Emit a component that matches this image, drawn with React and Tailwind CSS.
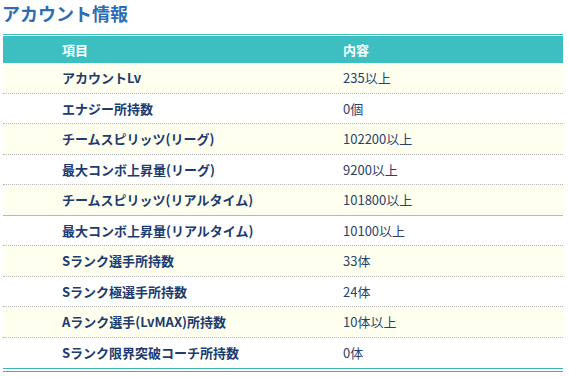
import React from 'react'

const rows = [
  ['アカウントLv', '235以上'],
  ['エナジー所持数', '0個'],
  ['チームスピリッツ(リーグ)', '102200以上'],
  ['最大コンボ上昇量(リーグ)', '9200以上'],
  ['チームスピリッツ(リアルタイム)', '101800以上'],
  ['最大コンボ上昇量(リアルタイム)', '10100以上'],
  ['Sランク選手所持数', '33体'],
  ['Sランク極選手所持数', '24体'],
  ['Aランク選手(LvMAX)所持数', '10体以上'],
  ['Sランク限界突破コーチ所持数', '0体'],
]

const App = () => {
  return (
    <div
      className="w-[569px] h-[377px] bg-white overflow-hidden"
      style={{ fontFamily: '"Noto Sans CJK JP", "Noto Sans", sans-serif' }}
    >
      <h2 className="h-[34px] pl-[2px] text-[18px] leading-[26px] font-bold text-[#2e6db4]">
        アカウント情報
      </h2>

      <div className="ml-[3px] w-[560px] border-t border-[#3dbfc1]">
        {/* header */}
        <div className="mt-px grid grid-cols-2 h-[27px] bg-[#3dbfc1] text-white text-[13px] font-bold items-center">
          <div className="pl-[59px]">項目</div>
          <div className="pl-[60px]">内容</div>
        </div>

        {/* rows */}
        <div className="border-b-4 border-double border-[#3fb3b5]">
          {rows.map((r, i) => {
            const last = i === rows.length - 1
            const odd = i % 2 === 0
            let border = 'border-b border-dotted border-[#b8b8b8]'
            if (i === 4) border = 'border-b border-solid border-[#a9bcc4]'
            if (last) border = ''
            return (
              <div
                key={i}
                className={`grid grid-cols-2 items-center text-[13px] ${odd ? 'bg-[#fffff0] h-[31px]' : 'bg-white h-[30px]'} ${last ? 'h-[29px]' : ''} ${border}`}
              >
                <div className="pl-[59px] font-bold text-[#1c3b6f]">{r[0]}</div>
                <div className="pl-[60px] text-[#2a3f6a]">{r[1]}</div>
              </div>
            )
          })}
        </div>
      </div>
    </div>
  )
}

export default App
